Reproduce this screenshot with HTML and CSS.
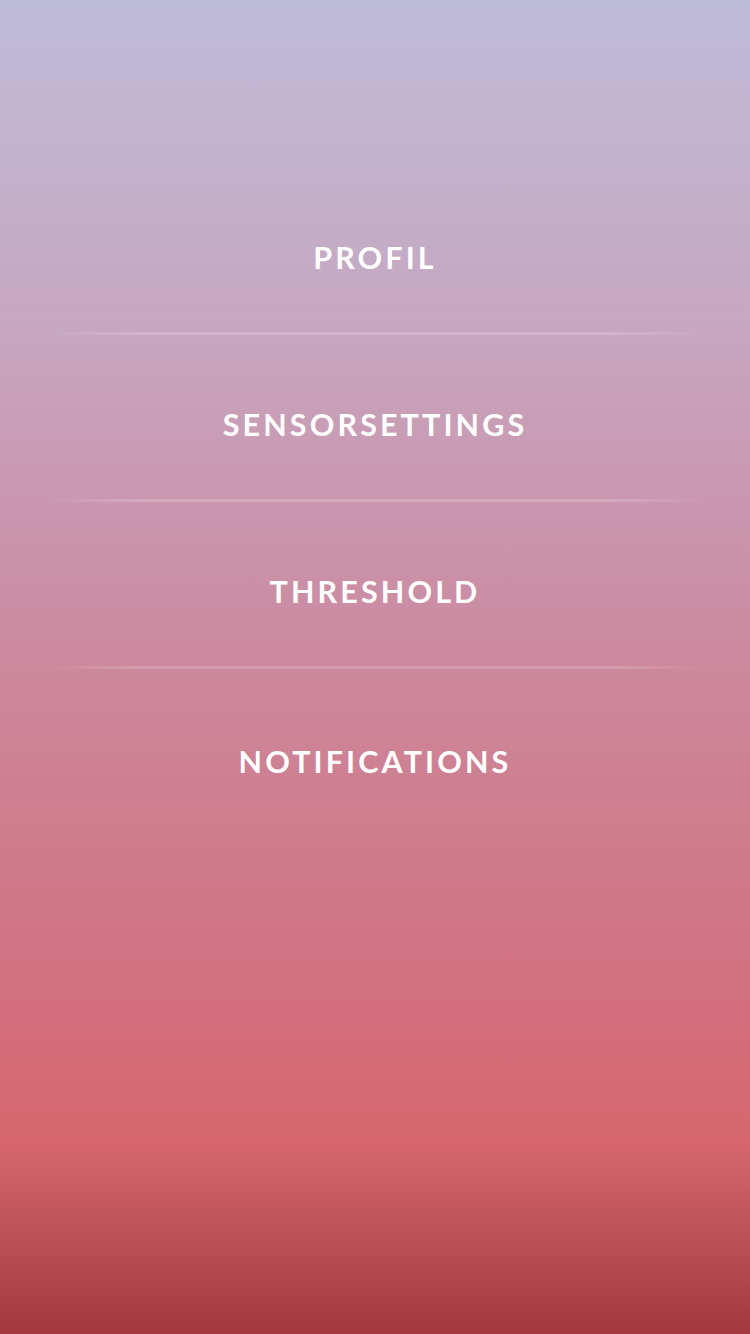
FILE: index.html
```html
<!DOCTYPE html>
<html lang="en">
<head>
<meta charset="utf-8">
<title>Settings</title>
<link rel="stylesheet" href="styles.css">
</head>
<body>
<main class="screen">
  <nav class="menu">
    <a class="menu-item" href="#">PROFIL</a>
    <div class="sep"></div>
    <a class="menu-item" href="#">SENSORSETTINGS</a>
    <div class="sep"></div>
    <a class="menu-item" href="#">THRESHOLD</a>
    <div class="sep"></div>
    <a class="menu-item" href="#">NOTIFICATIONS</a>
  </nav>
</main>
</body>
</html>
```
FILE: styles.css
```css
html, body {
  margin: 0;
  padding: 0;
}
body {
  width: 750px;
  height: 1334px;
  overflow: hidden;
  font-family: "Lato", "Open Sans", sans-serif;
}
.screen {
  height: 1334px;
  background: linear-gradient(180deg,
    #bebcd9 0px,
    #c7a6c0 330px,
    #cc889d 667px,
    #d2707e 1000px,
    #d6666c 1145px,
    #c3575e 1210px,
    #a2393f 1334px);
  padding-top: 168px;
  box-sizing: border-box;
}
.menu {
  display: flex;
  flex-direction: column;
}
.menu-item {
  height: 164px;
  box-sizing: border-box;
  padding-top: 14px;
  display: flex;
  align-items: center;
  justify-content: center;
  color: #ffffff;
  text-decoration: none;
  font-weight: 700;
  font-size: 30.5px;
  letter-spacing: 3.1px;
}
.menu-item:nth-of-type(4) {
  padding-top: 20px;
}
.sep {
  height: 3px;
  margin: 0 40px;
  background: linear-gradient(90deg,
    rgba(255,255,255,0) 0%,
    rgba(255,255,255,0.18) 15%,
    rgba(255,255,255,0.18) 85%,
    rgba(255,255,255,0) 100%);
}
```
